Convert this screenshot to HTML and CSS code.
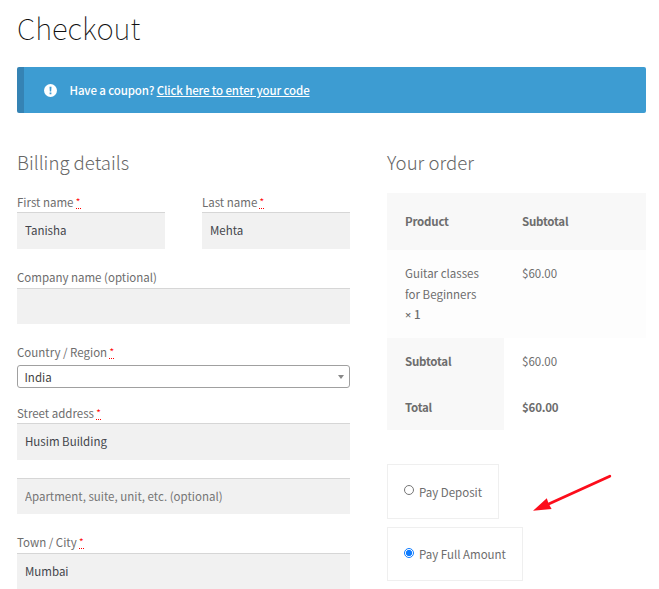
FILE: index.html
```html
<!DOCTYPE html>
<html lang="en">
<head>
<meta charset="utf-8">
<title>Checkout</title>
<link rel="stylesheet" href="styles.css">
</head>
<body>
<main class="page">
  <h1 class="title"><span>Checkout</span></h1>
  <div class="notice">
    <svg class="notice-icon" viewBox="0 0 13 13" width="13" height="13"><circle cx="6.5" cy="6.5" r="6.5" fill="#fff"/><path d="M5.5 2.7h2l-.3 4.8H5.8zM5.6 8.5h1.8v1.7H5.6z" fill="#3d9cd2"/></svg>
    <span class="notice-text">Have a coupon? <a href="#">Click here to enter your code</a></span>
  </div>
  <form class="columns">
    <section class="billing">
      <h3 class="heading"><span>Billing details</span></h3>
      <div class="pair">
        <div class="field first"><label for="fn">First name <abbr>*</abbr></label><input id="fn" type="text" value="Tanisha"></div>
        <div class="field first"><label for="ln">Last name <abbr>*</abbr></label><input id="ln" type="text" value="Mehta"></div>
      </div>
      <div class="field company"><label for="co">Company name (optional)</label><input id="co" type="text"></div>
      <div class="field country"><label>Country / Region <abbr>*</abbr></label><div class="select"><span>India</span><i class="caret"></i></div></div>
      <div class="field street"><label for="st">Street address <abbr>*</abbr></label><input id="st" type="text" value="Husim Building"></div>
      <div class="field unit"><input type="text" placeholder="Apartment, suite, unit, etc. (optional)"></div>
      <div class="field town"><label for="tc">Town / City <abbr>*</abbr></label><input id="tc" type="text" value="Mumbai"></div>
    </section>
    <section class="order">
      <h3 class="heading"><span>Your order</span></h3>
      <table>
        <thead><tr><th>Product</th><th>Subtotal</th></tr></thead>
        <tbody><tr><td>Guitar classes<br>for Beginners<br><b><span class="times">×</span> 1</b></td><td>$60.00</td></tr></tbody>
        <tfoot>
          <tr><th>Subtotal</th><td>$60.00</td></tr>
          <tr><th>Total</th><td><strong>$60.00</strong></td></tr>
        </tfoot>
      </table>
      <div class="options">
        <label class="option deposit"><input type="radio" name="pay"><span>Pay Deposit</span></label>
        <label class="option full"><input type="radio" name="pay" checked><span>Pay Full Amount</span></label>
        <svg class="arrow" viewBox="0 0 80 40" width="80" height="40"><path d="M77.8 3.2 15 31.8" stroke="#fc0d1b" stroke-width="2.8" stroke-linecap="round"/><path d="M1 37.8 14.8 25.3l1.4 4.2 1.2 2.4 2.2 4z" fill="#fc0d1b"/></svg>
      </div>
    </section>
  </form>
</main>
</body>
</html>
```

FILE: styles.css
```css
* { box-sizing: border-box; }
html { overflow: hidden; }
body {
  margin: 0;
  background: #fff;
  color: #6d6d6d;
  font: 11.5px/20px "Noto Sans CJK SC", sans-serif;
}
.page { width: 659px; height: 589px; overflow: hidden; padding: 0 13px 0 17px; }
.title {
  margin: 0;
  height: 67px;
  padding-top: 2px;
  font-size: 29.4px;
  line-height: 50px;
  font-weight: 100;
  color: #111;
}
.notice {
  display: flex;
  align-items: center;
  height: 46px;
  padding-left: 20px;
  border-left: 7px solid #3583b4;
  border-radius: 2px;
  background: #3d9cd2;
  color: #fff;
}
.notice-icon { margin-right: 12.5px; }
.notice a { color: #fff; text-decoration: underline; }
.notice-text { font-weight: 500; letter-spacing: -0.13px; }
.columns { display: flex; gap: 37px; margin-top: 35px; }
.billing { width: 333px; }
.order { width: 259px; }
.heading {
  margin: 0;
  height: 45px;
  font-size: 18.6px;
  line-height: 28px;
  font-weight: 300;
  color: #666;
}
.pair { display: flex; gap: 37px; }
.field { display: flex; flex-direction: column; }
.field label { height: 19px; line-height: 19px; }
.pair .field { width: 148px; }
.field input {
  width: 100%;
  height: 37px;
  padding: 0 8px 2px;
  border: 0;
  border-top: 1px solid #d6d6d6;
  border-radius: 0;
  background: #f1f1f1;
  color: #43454b;
  font: inherit;
  outline: 0;
}
.field input::placeholder { color: #757575; opacity: 1; }
.company { margin-top: 19px; }
.company label, .town label { height: 20px; }
.company input, .unit input { height: 36px; }
.country { margin-top: 19px; }
.country label { height: 22px; }
.street { margin-top: 16px; }
.unit { margin-top: 18px; }
.town { margin-top: 19px; }
abbr {
  margin-left: -0.5px;
  color: #f00;
  font-weight: 300;
  text-decoration: none;
  border-bottom: 1px dotted #f00;
  display: inline-block;
  line-height: 14px;
  height: 14px;
}
.select {
  display: flex;
  align-items: center;
  justify-content: space-between;
  height: 23px;
  padding: 0 5px 0 6.5px;
  border: 1px solid #a0a0a0;
  border-radius: 3px;
  color: #444;
}
.caret { border: 3px solid transparent; border-top: 4px solid #888; border-bottom: 0; }
table { width: 259px; border-collapse: collapse; table-layout: fixed; }
th, td { padding: 0 0 0 18px; text-align: left; vertical-align: middle; font-weight: 400; }
th:first-child, td:first-child { width: 117px; }
th, strong { font-weight: 600; letter-spacing: -0.22px; }
b { font-weight: 500; }
.times { font-family: "Open Sans", sans-serif; font-size: 11px; font-weight: 600; }
thead tr { height: 57px; background: #f8f8f8; }
thead th { padding-bottom: 2px; }
tbody tr { height: 88px; background: #fdfdfd; }
tbody td { vertical-align: top; padding-top: 13px; line-height: 20.7px; }
tfoot tr { height: 46px; }
tfoot th { background: #f8f8f8; }
.options { position: relative; display: flex; flex-direction: column; align-items: flex-start; gap: 8px; margin-top: 34px; }
.option { display: flex; align-items: center; border: 1px solid #efefef; padding-left: 16px; }
.option input { appearance: none; width: 10px; height: 10px; margin: 0 5px 3px 0; border: 1px solid #767676; border-radius: 50%; }
.option input:checked { border-color: #0d7bff; background: radial-gradient(circle, #0d7bff 0 2.8px, #fff 3.4px); }
.deposit { width: 112px; height: 55px; }
.full { width: 136px; height: 54px; }
.arrow { position: absolute; left: 145px; top: 9px; }
```
